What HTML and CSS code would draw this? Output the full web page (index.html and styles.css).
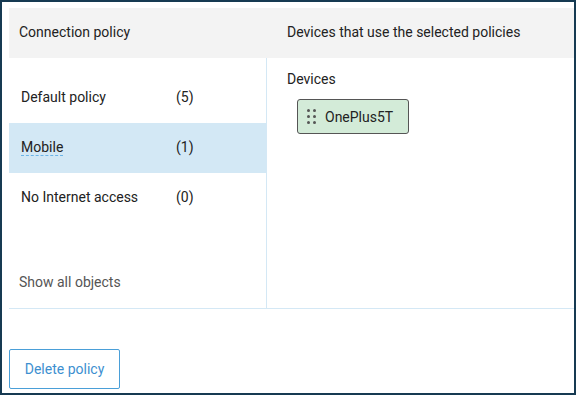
FILE: index.html
```html
<!DOCTYPE html>
<html lang="en">
<head>
    <meta charset="UTF-8">
    <title>Connection policy</title>
    <link rel="stylesheet" href="styles.css">
</head>
<body>
    <div class="frame">
        <div class="panel">
            <div class="panel-header">
                <div class="col-title left">Connection policy</div>
                <div class="col-title right">Devices that use the selected policies</div>
            </div>
            <div class="panel-body">
                <div class="policy-list">
                    <div class="policy-row">
                        <span class="policy-name">Default policy</span>
                        <span class="policy-count">(5)</span>
                    </div>
                    <div class="policy-row selected">
                        <span class="policy-name"><span class="dashed">Mobile</span></span>
                        <span class="policy-count">(1)</span>
                    </div>
                    <div class="policy-row">
                        <span class="policy-name">No Internet access</span>
                        <span class="policy-count">(0)</span>
                    </div>
                    <div class="show-all">Show all objects</div>
                </div>
                <div class="devices">
                    <div class="devices-label">Devices</div>
                    <div class="chip">
                        <span class="grip">
                            <i></i><i></i><i></i><i></i><i></i><i></i>
                        </span>
                        OnePlus5T
                    </div>
                </div>
            </div>
        </div>
        <div class="actions">
            <button class="btn-outline">Delete policy</button>
        </div>
    </div>
</body>
</html>
```

FILE: styles.css
```css
html, body {
    margin: 0;
    height: 100%;
}
body {
    font-family: Roboto, "Liberation Sans", sans-serif;
    font-size: 14px;
    color: #222;
    background: #fff;
}
.frame {
    box-sizing: border-box;
    height: 395px;
    border: 2px solid #163a52;
    padding: 6px 0 0 7px;
}
.panel-header {
    display: grid;
    grid-template-columns: 258px 1fr;
    height: 50px;
    background: #f3f3f3;
}
.col-title {
    display: flex;
    align-items: center;
    padding-bottom: 2px;
}
.col-title.left {
    padding-left: 10px;
}
.col-title.right {
    padding-left: 20px;
}
.panel-body {
    display: grid;
    grid-template-columns: 258px 1fr;
    height: 250px;
    border-bottom: 1px solid #d4e8f5;
}
.policy-list {
    display: flex;
    flex-direction: column;
    padding-top: 15px;
    border-right: 1px solid #d4e8f5;
}
.policy-row {
    display: flex;
    align-items: center;
    box-sizing: border-box;
    height: 50px;
    padding: 0 0 2px 12px;
}
.policy-row.selected {
    background: #d3e8f5;
}
.policy-name {
    width: 155px;
}
.dashed {
    border-bottom: 1px dashed #6cb4e6;
}
.show-all {
    margin-top: auto;
    padding: 0 0 16px 10px;
    line-height: 20px;
    color: #555;
}
.devices {
    padding: 13px 20px 12px;
}
.devices-label {
    line-height: 16px;
}
.chip {
    display: inline-flex;
    align-items: center;
    box-sizing: border-box;
    width: 112px;
    height: 35px;
    margin: 12px 0 0 10px;
    padding-left: 9px;
    background: #d3ebd8;
    border: 1px solid #555;
    border-radius: 3px;
}
.grip {
    display: grid;
    grid-template-columns: 3px 3px;
    column-gap: 3px;
    row-gap: 3px;
    margin-right: 9px;
}
.grip i {
    width: 3px;
    height: 3px;
    border-radius: 50%;
    background: #555;
}
.actions {
    padding-top: 40px;
}
.btn-outline {
    width: 111px;
    height: 40px;
    background: #fff;
    border: 1px solid #4a9fd8;
    border-radius: 2px;
    color: #3d8fd0;
    font-family: inherit;
    font-size: 14px;
    cursor: pointer;
}
```
